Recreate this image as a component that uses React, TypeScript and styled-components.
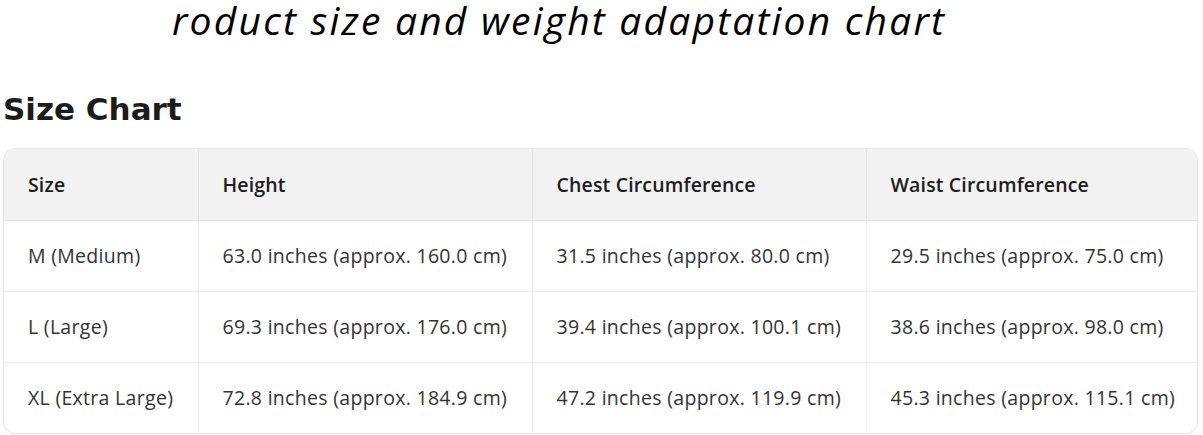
import * as React from 'react';
import styled, { createGlobalStyle } from 'styled-components';

const GlobalStyle = createGlobalStyle`
    html, body {
        margin: 0;
        padding: 0;
        background: #fff;
    }
    body {
        font-family: "Open Sans", "Noto Sans", sans-serif;
        color: #1a1a1a;
    }
`;

const Page = styled.div`
    width: 1203px;
    height: 435px;
    overflow: hidden;
    padding: 0 5px 0 3px;
    box-sizing: border-box;
`;

const Banner = styled.h1`
    margin: 0;
    height: 48px;
    padding-left: 169px;
    font-family: "Open Sans", sans-serif;
    font-style: italic;
    font-weight: 400;
    font-size: 39px;
    line-height: 40px;
    color: #000;
    letter-spacing: 2.2px;
    white-space: nowrap;
`;

const Heading = styled.h2`
    margin: 40px 0 0;
    height: 60px;
    font-family: "DejaVu Sans", sans-serif;
    font-weight: 700;
    font-size: 31px;
    line-height: 42px;
    color: #1c1c1c;
`;

const TableWrap = styled.div`
    border: 1px solid #e6e6e6;
    border-radius: 12px;
    overflow: hidden;
`;

const Table = styled.table`
    width: 100%;
    border-collapse: collapse;
    table-layout: fixed;
`;

const HeadCell = styled.th`
    height: 71px;
    padding: 0 0 0 24px;
    box-sizing: border-box;
    text-align: left;
    background: #f2f2f2;
    font-family: "Open Sans", sans-serif;
    font-weight: 600;
    font-size: 19.5px;
    letter-spacing: 0.15px;
    color: #1c1c1c;
    white-space: nowrap;
    border-right: 1px solid #e3e3e3;
    border-bottom: 1px solid #e3e3e3;
    &:last-child { border-right: none; }
`;

const Cell = styled.td`
    height: 71px;
    padding: 0 0 0 24px;
    box-sizing: border-box;
    font-family: "Open Sans", sans-serif;
    font-size: 19.5px;
    letter-spacing: 0.3px;
    color: #333;
    white-space: nowrap;
    border-right: 1px solid #ececec;
    border-bottom: 1px solid #ececec;
    &:last-child { border-right: none; }
`;

const Row = styled.tr`
    &:last-child td { border-bottom: none; }
`;

const Col = styled.col<{ $w: number }>`
    width: ${(p) => p.$w}px;
`;

const rows = [
    ['M (Medium)', '63.0 inches (approx. 160.0 cm)', '31.5 inches (approx. 80.0 cm)', '29.5 inches (approx. 75.0 cm)'],
    ['L (Large)', '69.3 inches (approx. 176.0 cm)', '39.4 inches (approx. 100.1 cm)', '38.6 inches (approx. 98.0 cm)'],
    ['XL (Extra Large)', '72.8 inches (approx. 184.9 cm)', '47.2 inches (approx. 119.9 cm)', '45.3 inches (approx. 115.1 cm)'],
];

export default function App(): JSX.Element {
    return (
        <Page>
            <GlobalStyle />
            <Banner>roduct size and weight adaptation chart</Banner>
            <Heading>Size Chart</Heading>
            <TableWrap>
                <Table>
                    <colgroup>
                        <Col $w={194} />
                        <Col $w={334} />
                        <Col $w={334} />
                        <Col $w={331} />
                    </colgroup>
                    <thead>
                        <tr>
                            <HeadCell>Size</HeadCell>
                            <HeadCell>Height</HeadCell>
                            <HeadCell>Chest Circumference</HeadCell>
                            <HeadCell>Waist Circumference</HeadCell>
                        </tr>
                    </thead>
                    <tbody>
                        {rows.map((r) => (
                            <Row key={r[0]}>
                                {r.map((c) => <Cell key={c}>{c}</Cell>)}
                            </Row>
                        ))}
                    </tbody>
                </Table>
            </TableWrap>
        </Page>
    );
}
